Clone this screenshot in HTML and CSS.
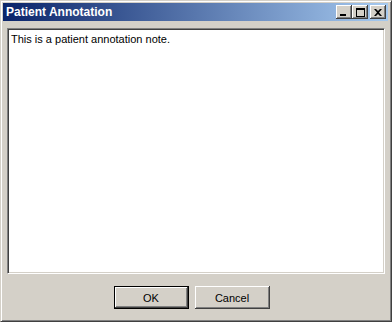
FILE: index.html
```html
<!DOCTYPE html>
<html lang="en">
<head>
<meta charset="UTF-8">
<meta name="viewport" content="width=device-width, initial-scale=1.0">
<title>Patient Annotation</title>
<link rel="stylesheet" href="styles.css">
</head>
<body>
<div class="window">
  <div class="titlebar">
    <span class="title">Patient Annotation</span>
    <div class="title-buttons">
      <button class="tbtn" aria-label="Minimize">
        <svg width="8" height="7" viewBox="0 0 8 7"><rect x="0" y="5" width="6" height="2" fill="#000"/></svg>
      </button>
      <button class="tbtn" aria-label="Maximize">
        <svg width="9" height="9" viewBox="0 0 9 9"><rect x="0.5" y="1.5" width="8" height="7" fill="none" stroke="#000"/><rect x="0" y="0" width="9" height="2" fill="#000"/></svg>
      </button>
      <button class="tbtn tbtn-close" aria-label="Close">
        <svg width="8" height="7" viewBox="0 0 8 7"><path d="M0 0h2l2 2 2-2h2L5 3.5 8 7H6L4 5 2 7H0l3-3.5z" fill="#000"/></svg>
      </button>
    </div>
  </div>

  <div class="content">
    <div class="note">This is a patient annotation note.</div>
  </div>

  <div class="actions">
    <button class="btn btn-default">OK</button>
    <button class="btn">Cancel</button>
  </div>
</div>
</body>
</html>
```

FILE: styles.css
```css
html, body {
  margin: 0;
  padding: 0;
}

body {
  font-family: "Liberation Sans", Arial, sans-serif;
  font-size: 11px;
  background: #d4d0c8;
}

.window {
  width: 392px;
  height: 322px;
  box-sizing: border-box;
  background: #d4d0c8;
  border-top: 1px solid #d4d0c8;
  border-left: 1px solid #d4d0c8;
  border-right: 1px solid #404040;
  border-bottom: 1px solid #404040;
  box-shadow: inset 1px 1px 0 #ffffff, inset -1px -1px 0 #808080;
  padding: 2px 3px 3px 2px;
  display: flex;
  flex-direction: column;
}

.titlebar {
  height: 18px;
  background: linear-gradient(to right, #0a246a, #a6caf0);
  display: flex;
  align-items: center;
  justify-content: space-between;
  padding: 0 2px 0 3px;
}

.title {
  color: #fff;
  font-weight: bold;
  font-size: 12px;
}

.title-buttons {
  display: flex;
}

.tbtn {
  width: 16px;
  height: 14px;
  padding: 0;
  margin: 0;
  border: none;
  background: #d4d0c8;
  box-shadow: inset -1px -1px 0 #404040, inset 1px 1px 0 #ffffff, inset -2px -2px 0 #808080;
  display: flex;
  align-items: center;
  justify-content: center;
}

.tbtn-close {
  margin-left: 2px;
}

.content {
  flex: 1;
  padding: 7px 3px 0 4px;
  display: flex;
}

.note {
  flex: 1;
  background: #fff;
  border-top: 1px solid #808080;
  border-left: 1px solid #808080;
  border-right: 1px solid #ffffff;
  border-bottom: 1px solid #ffffff;
  box-shadow: inset 1px 1px 0 #404040, inset -1px -1px 0 #d4d0c8;
  padding: 4px 3px;
  color: #000;
  line-height: 13px;
}

.actions {
  height: 44px;
  box-sizing: border-box;
  display: flex;
  justify-content: center;
  align-items: flex-start;
  gap: 6px;
  padding: 12px 8px 0 0;
}

.btn {
  width: 75px;
  height: 23px;
  box-sizing: border-box;
  font-family: "Liberation Sans", Arial, sans-serif;
  font-size: 11px;
  color: #000;
  background: #d4d0c8;
  border: none;
  box-shadow: inset -1px -1px 0 #404040, inset 1px 1px 0 #ffffff, inset -2px -2px 0 #808080;
  padding: 0;
}

.btn-default {
  border: 1px solid #000;
}
```
